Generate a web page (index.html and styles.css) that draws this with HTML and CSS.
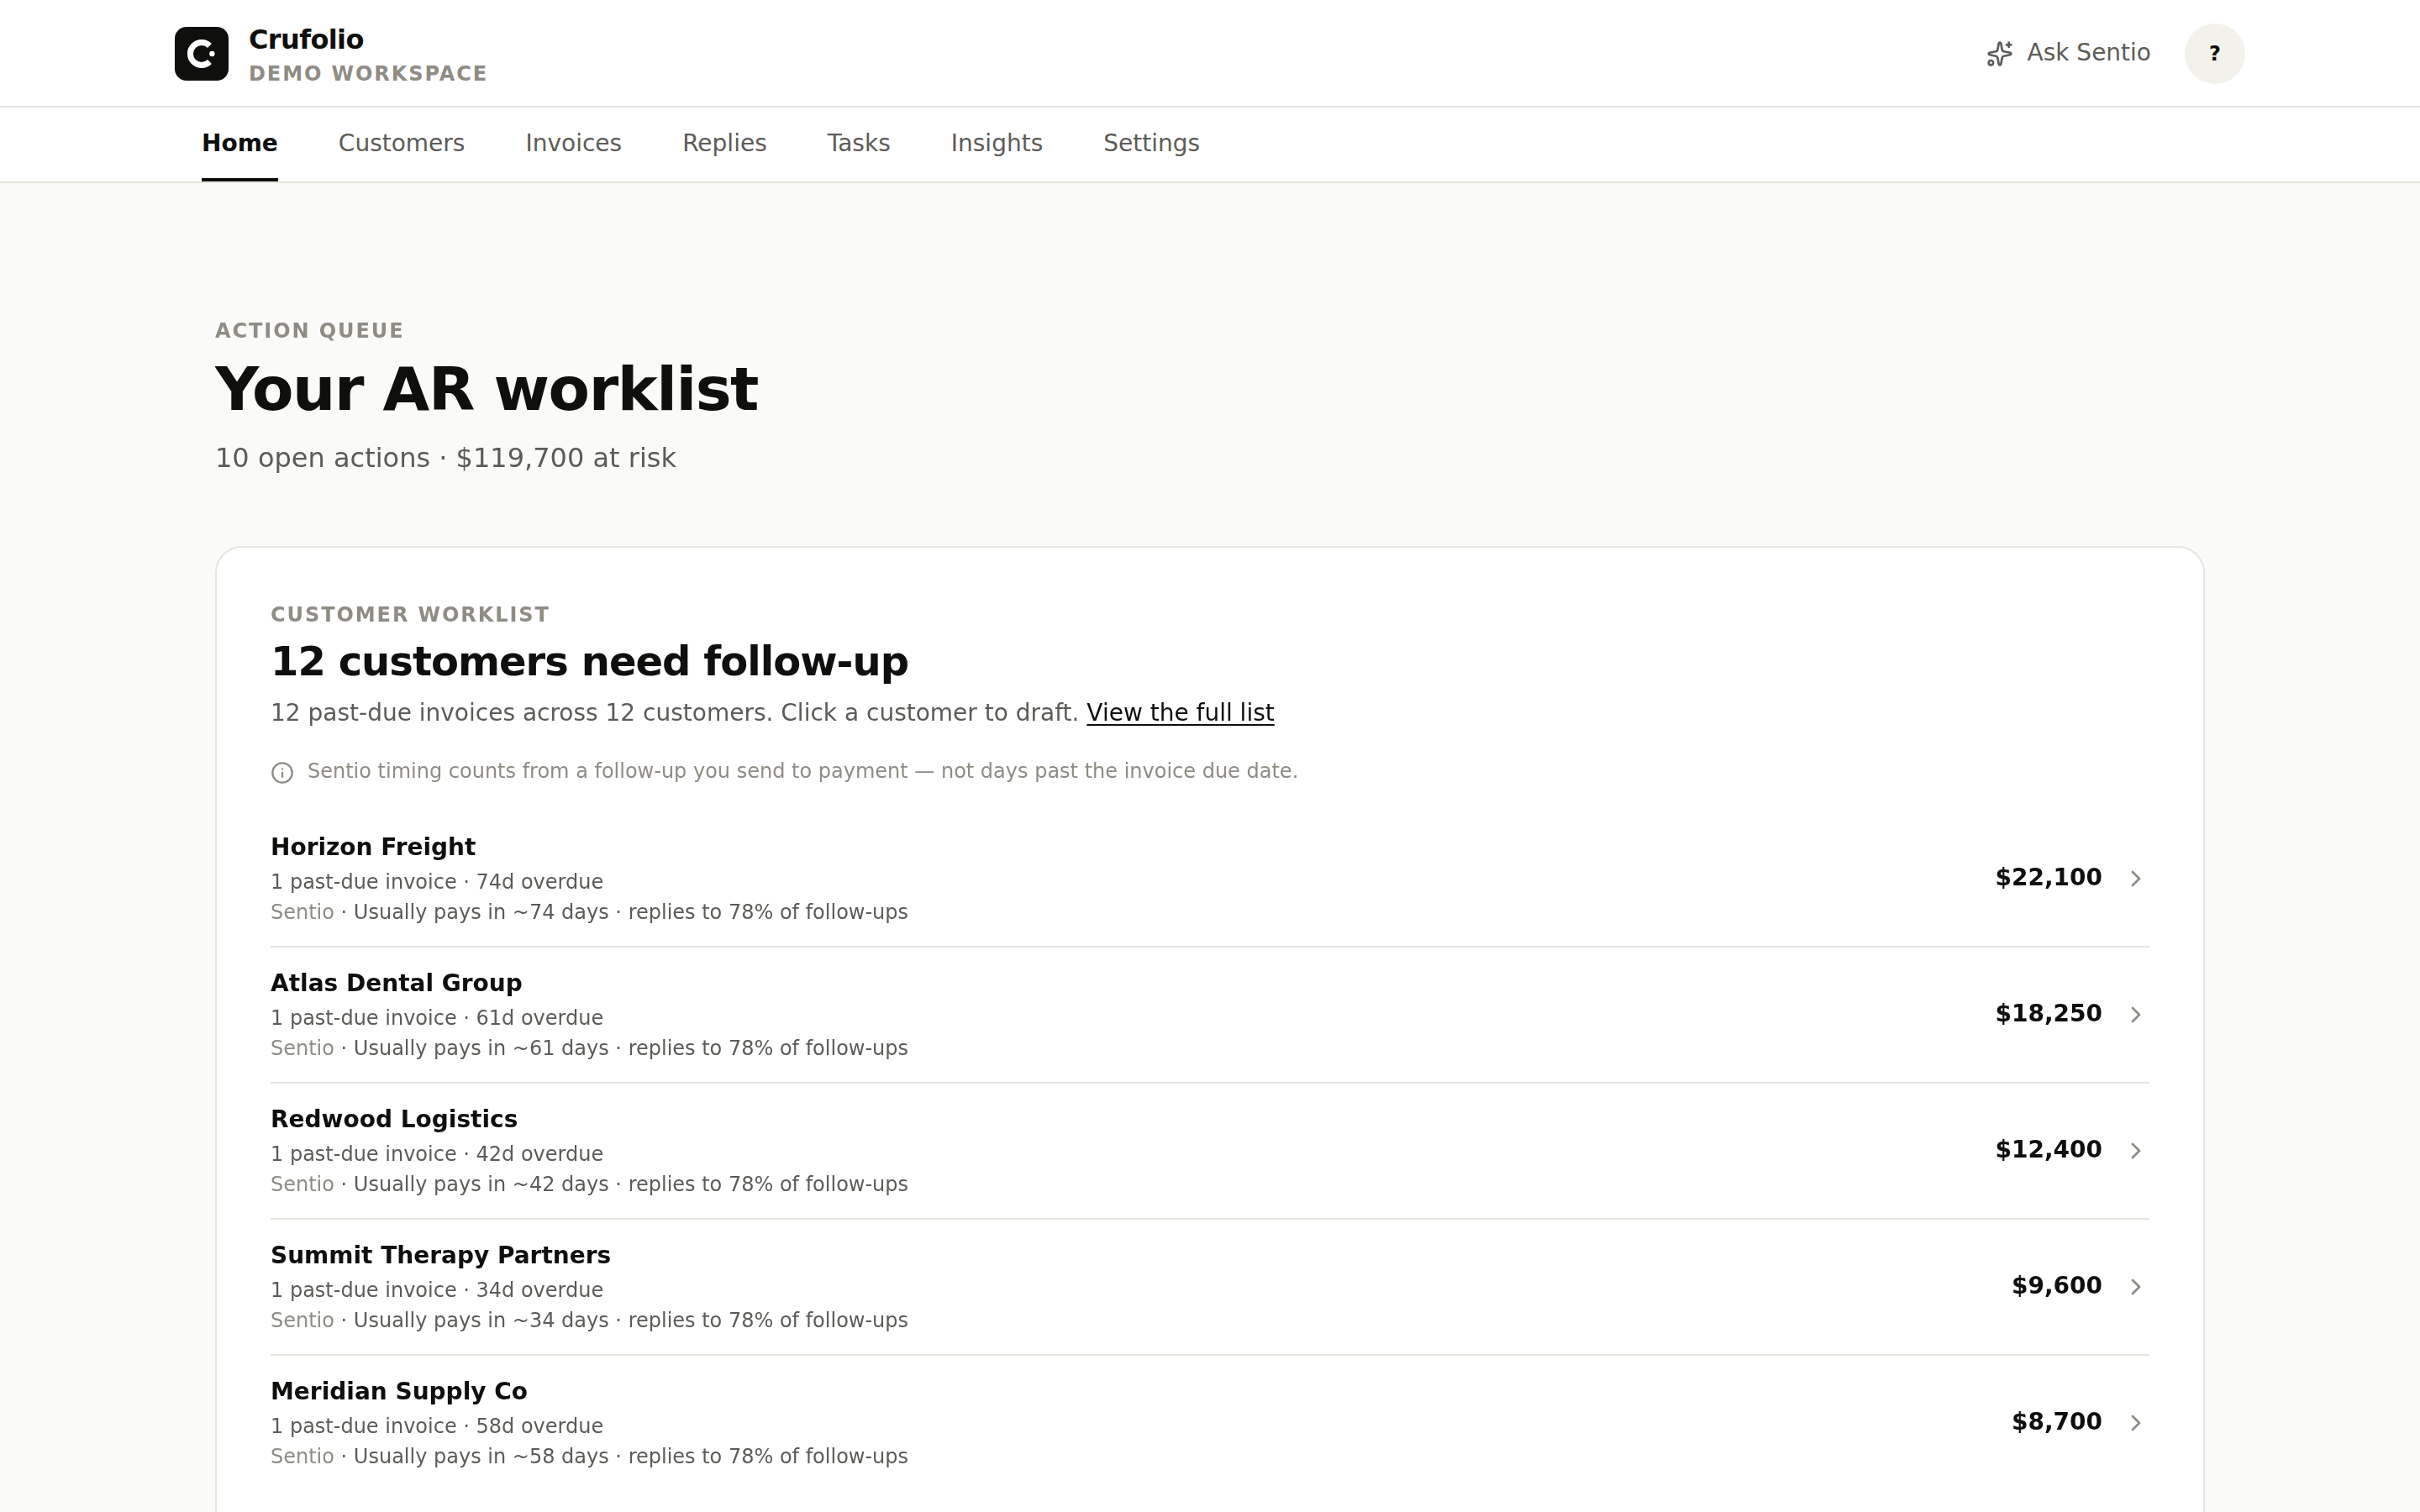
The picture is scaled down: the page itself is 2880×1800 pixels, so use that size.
FILE: index.html
```
<!DOCTYPE html>
<html lang="en">

<head>
    <meta charset="UTF-8">
    <meta name="viewport" content="width=device-width, initial-scale=1.0">
    <title>Crufolio</title>
    <link rel="stylesheet" href="styles.css">
</head>

<body>

    <header class="topbar">
        <div class="topbar-inner">
            <div class="brand">
                <svg class="logo" viewBox="0 0 64 64">
                    <rect width="64" height="64" rx="14" fill="#0f0f0d" />
                    <path d="M41.5 22.5A13.5 13.5 0 1 0 41.5 41.5" fill="none" stroke="#fff" stroke-width="7" />
                    <circle cx="44.4" cy="32" r="3.2" fill="#fff" />
                </svg>
                <div class="brand-text">
                    <div class="brand-name">Crufolio</div>
                    <div class="label">Demo workspace</div>
                </div>
            </div>
            <div class="actions">
                <a class="ask">
                    <svg class="icon" viewBox="0 0 24 24">
                        <path d="M11.017 2.814a1 1 0 0 1 1.966 0l1.051 5.558a2 2 0 0 0 1.594 1.594l5.558 1.051a1 1 0 0 1 0 1.966l-5.558 1.051a2 2 0 0 0-1.594 1.594l-1.051 5.558a1 1 0 0 1-1.966 0l-1.051-5.558a2 2 0 0 0-1.594-1.594l-5.558-1.051a1 1 0 0 1 0-1.966l5.558-1.051a2 2 0 0 0 1.594-1.594z" />
                        <path d="M20 2v4" />
                        <path d="M22 4h-4" />
                        <circle cx="4" cy="20" r="2" />
                    </svg>
                    <span>Ask Sentio</span>
                </a>
                <div class="avatar">?</div>
            </div>
        </div>
    </header>

    <nav class="nav">
        <div class="nav-inner">
            <a class="nav-link active">Home</a>
            <a class="nav-link">Customers</a>
            <a class="nav-link">Invoices</a>
            <a class="nav-link">Replies</a>
            <a class="nav-link">Tasks</a>
            <a class="nav-link">Insights</a>
            <a class="nav-link">Settings</a>
        </div>
    </nav>

    <main class="main">
        <div class="label">Action queue</div>
        <h1>Your AR worklist</h1>
        <p class="summary">10 open actions · $119,700 at risk</p>

        <section class="card">
            <div class="label">Customer worklist</div>
            <h2>12 customers need follow-up</h2>
            <p class="card-sub">12 past-due invoices across 12 customers. Click a customer to draft. <a class="link">View the full list</a></p>
            <div class="note">
                <svg class="icon info" viewBox="0 0 24 24">
                    <circle cx="12" cy="12" r="10" />
                    <path d="M12 16v-4" />
                    <path d="M12 8h.01" />
                </svg>
                <span>Sentio timing counts from a follow-up you send to payment — not days past the invoice due date.</span>
            </div>

            <div class="list">
                <div class="row">
                    <div class="customer">
                        <h3>Horizon Freight</h3>
                        <p>1 past-due invoice · 74d overdue</p>
                        <p><span class="muted">Sentio</span> · Usually pays in ~74 days · replies to 78% of follow-ups</p>
                    </div>
                    <div class="amount">$22,100</div>
                    <svg class="icon chevron" viewBox="0 0 24 24"><path d="m9 18 6-6-6-6" /></svg>
                </div>
                <div class="row">
                    <div class="customer">
                        <h3>Atlas Dental Group</h3>
                        <p>1 past-due invoice · 61d overdue</p>
                        <p><span class="muted">Sentio</span> · Usually pays in ~61 days · replies to 78% of follow-ups</p>
                    </div>
                    <div class="amount">$18,250</div>
                    <svg class="icon chevron" viewBox="0 0 24 24"><path d="m9 18 6-6-6-6" /></svg>
                </div>
                <div class="row">
                    <div class="customer">
                        <h3>Redwood Logistics</h3>
                        <p>1 past-due invoice · 42d overdue</p>
                        <p><span class="muted">Sentio</span> · Usually pays in ~42 days · replies to 78% of follow-ups</p>
                    </div>
                    <div class="amount">$12,400</div>
                    <svg class="icon chevron" viewBox="0 0 24 24"><path d="m9 18 6-6-6-6" /></svg>
                </div>
                <div class="row">
                    <div class="customer">
                        <h3>Summit Therapy Partners</h3>
                        <p>1 past-due invoice · 34d overdue</p>
                        <p><span class="muted">Sentio</span> · Usually pays in ~34 days · replies to 78% of follow-ups</p>
                    </div>
                    <div class="amount">$9,600</div>
                    <svg class="icon chevron" viewBox="0 0 24 24"><path d="m9 18 6-6-6-6" /></svg>
                </div>
                <div class="row">
                    <div class="customer">
                        <h3>Meridian Supply Co</h3>
                        <p>1 past-due invoice · 58d overdue</p>
                        <p><span class="muted">Sentio</span> · Usually pays in ~58 days · replies to 78% of follow-ups</p>
                    </div>
                    <div class="amount">$8,700</div>
                    <svg class="icon chevron" viewBox="0 0 24 24"><path d="m9 18 6-6-6-6" /></svg>
                </div>
            </div>
        </section>
    </main>

</body>

</html>
```
FILE: styles.css
```
* {
    box-sizing: border-box;
    margin: 0;
    padding: 0;
}

body {
    height: 1800px;
    overflow: hidden;
    background-color: #fafaf8;
    color: #0f0f0d;
    font-family: "DejaVu Sans", sans-serif;
    font-size: 28px;
}

.icon {
    width: 32px;
    height: 32px;
    flex-shrink: 0;
    fill: none;
    stroke: currentColor;
    stroke-width: 2;
    stroke-linecap: round;
    stroke-linejoin: round;
}

.label {
    font-size: 24px;
    line-height: 28px;
    font-weight: bold;
    letter-spacing: 0.08em;
    text-transform: uppercase;
    color: #8f8c84;
}

/* header */
.topbar {
    height: 128px;
    background-color: #fff;
    border-bottom: 2px solid #e8e5df;
}

.topbar-inner {
    max-width: 2560px;
    margin: 0 auto;
    padding: 28px 48px 0;
    display: flex;
    justify-content: space-between;
    align-items: flex-start;
}

.brand {
    display: flex;
    gap: 24px;
}

.logo {
    width: 64px;
    height: 64px;
    margin-top: 4px;
}

.brand-name {
    font-size: 32px;
    line-height: 38px;
    font-weight: bold;
    letter-spacing: -0.02em;
    margin-bottom: 8px;
}

.actions {
    display: flex;
    align-items: center;
    gap: 40px;
}

.ask {
    display: flex;
    align-items: center;
    gap: 17px;
    color: #5c5b57;
}

.ask span {
    line-height: 33px;
    padding-bottom: 3px;
}

.avatar {
    width: 72px;
    height: 72px;
    border-radius: 50%;
    background-color: #f2f1ec;
    font-size: 24px;
    line-height: 72px;
    font-weight: bold;
    text-align: center;
}

/* tabs */
.nav {
    height: 90px;
    background-color: #fff;
    border-bottom: 2px solid #e8e5df;
}

.nav-inner {
    max-width: 2560px;
    height: 88px;
    margin: 0 auto;
    padding: 0 80px;
    display: flex;
    gap: 72px;
}

.nav-link {
    padding-top: 26px;
    line-height: 33px;
    color: #5c5b57;
    border-bottom: 4px solid transparent;
}

.nav-link.active {
    color: #0f0f0d;
    font-weight: bold;
    border-bottom-color: #0f0f0d;
}

/* page */
.main {
    width: 2368px;
    height: 1582px;
    margin: 0 auto;
    padding-top: 162px;
    overflow: hidden;
    will-change: transform;
}

h1 {
    margin-top: 13px;
    font-size: 72px;
    line-height: 84px;
    letter-spacing: -0.02em;
}

.summary {
    margin-top: 21px;
    font-size: 32px;
    line-height: 38px;
    color: #5c5b57;
}

/* card runs on below the fold */
.card {
    margin-top: 86px;
    padding: 66px 64px;
    background-color: #fff;
    border: 2px solid #e8e5df;
    border-radius: 32px;
    height: 1400px;
}

h2 {
    margin-top: 13px;
    font-size: 48px;
    line-height: 56px;
    letter-spacing: -0.02em;
}

.card-sub {
    margin-top: 17px;
    line-height: 33px;
    color: #5c5b57;
}

.link {
    color: #0f0f0d;
    text-decoration: underline;
    text-underline-offset: 4px;
}

.note {
    display: flex;
    gap: 16px;
    margin-top: 39px;
    font-size: 24px;
    line-height: 28px;
    color: #8f8c84;
}

.info {
    width: 28px;
    height: 28px;
    margin-top: 2px;
}

.list {
    margin-top: 32px;
}

.row {
    display: flex;
    align-items: center;
    height: 162px;
    border-bottom: 2px solid #e8e5df;
}

.row:last-child {
    border-bottom-color: transparent;
}

.customer {
    flex: 1;
    padding-top: 2px;
}

.customer h3 {
    font-size: 28px;
    line-height: 37px;
    margin-bottom: 5px;
}

.customer p {
    font-size: 24px;
    line-height: 36px;
    color: #5c5b57;
}

.customer .muted {
    color: #8f8c84;
}

.amount {
    margin-right: 24px;
    padding-bottom: 3px;
    line-height: 33px;
    font-weight: bold;
}

.chevron {
    color: #8f8c84;
}
```
